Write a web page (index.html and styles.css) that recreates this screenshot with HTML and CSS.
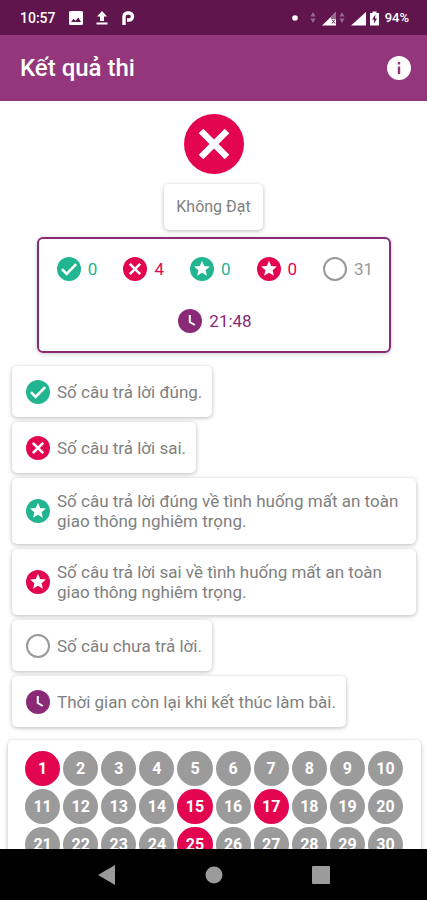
FILE: index.html
```html
<!DOCTYPE html>
<html lang="vi">
<head>
<meta charset="utf-8">
<meta name="viewport" content="width=device-width, initial-scale=1">
<title>Kết quả thi</title>
<link rel="stylesheet" href="styles.css">
</head>
<body>
<svg class="sprite" aria-hidden="true">
  <symbol id="check" viewBox="0 0 24 24"><circle cx="12" cy="12" r="12" fill="currentColor"/><path d="M5 12.200l4.600 4.600 9.600-9.600" fill="none" stroke="#fff" stroke-width="2.600"/></symbol>
  <symbol id="cross" viewBox="0 0 24 24"><circle cx="12" cy="12" r="12" fill="currentColor"/><path d="M6.800 6.800l10.400 10.400M17.200 6.800L6.800 17.200" fill="none" stroke="#fff" stroke-width="2.600"/></symbol>
  <symbol id="star" viewBox="0 0 24 24"><circle cx="12" cy="12" r="12" fill="currentColor"/><path d="M12 3.700l2.200 5.300 5.700.5-4.300 3.700 1.300 5.600-4.900-3-4.900 3 1.300-5.600-4.300-3.700 5.700-.5z" fill="#fff"/></symbol>
  <symbol id="ring" viewBox="0 0 24 24"><circle cx="12" cy="12" r="11" fill="none" stroke="currentColor" stroke-width="2"/></symbol>
  <symbol id="clock" viewBox="0 0 24 24"><circle cx="12" cy="12" r="12" fill="currentColor"/><path d="M11.800 6v7l5 3" fill="none" stroke="#fff" stroke-width="2"/></symbol>
</svg>

<div class="status">
  <span class="time">10:57</span>
  <svg class="note" viewBox="0 0 14 14"><rect width="14" height="14" rx="1.500" fill="#fff"/><path d="M2 11l2.500-3.200 2 2L9.300 6.500 12 11z" fill="#60154d"/></svg>
  <svg class="note" viewBox="0 0 14 14"><path d="M7 0l5 5.500H9V10H5V5.500H2zM1.500 11.500h11v2h-11z" fill="#fff"/></svg>
  <svg class="note" viewBox="0 0 14 14"><path d="M3 14V5.500A3.500 3.500 0 0 1 6.500 2H8a3.500 3.500 0 0 1 0 7H6" fill="none" stroke="#fff" stroke-width="3.400"/></svg>
  <svg class="signals" viewBox="0 0 90 16">
    <circle cx="4" cy="8" r="2.800" fill="#fff"/>
    <path d="M19.500 6.500L22 2l2.500 4.500zM19.500 8.500L22 13l2.500-4.500zM48.500 6.500L51 2l2.500 4.500zM48.500 8.500L51 13l2.500-4.500z" fill="#94698a"/>
    <path d="M31 15.500L45 2v13.500z" fill="#fff"/><path d="M40 6.500L45 2v7h-5z" fill="#94698a"/><path d="M41 9.500l3 4m0-4l-3 4" stroke="#60154d"/>
    <path d="M60 15.500L75 2v13.500z" fill="#fff"/>
    <path d="M79 3h2.500V1.500h4V3H88v12.500h-9z" fill="#fff"/><path d="M84.500 4.500L81 9.500h2v4l3-5h-2z" fill="#60154d"/>
  </svg>
  <span class="battery">94%</span>
</div>

<header class="appbar">
  <h1>Kết quả thi</h1>
  <button class="info" aria-label="Thông tin"><svg viewBox="0 0 24 24"><circle cx="12" cy="12" r="12" fill="#fff"/><path d="M10.800 6h2.400v2.400h-2.400zM10.800 10.500h2.400V18h-2.400z" fill="#93367b"/></svg></button>
</header>

<main>
  <svg class="verdict bad"><use href="#cross"/></svg>
  <p class="card result">Không Đạt</p>

  <section class="summary">
    <span class="stat good"><svg class="icon"><use href="#check"/></svg>0</span>
    <span class="stat bad"><svg class="icon"><use href="#cross"/></svg>4</span>
    <span class="stat good"><svg class="icon"><use href="#star"/></svg>0</span>
    <span class="stat bad"><svg class="icon"><use href="#star"/></svg>0</span>
    <span class="stat none"><svg class="icon"><use href="#ring"/></svg>31</span>
    <span class="stat left"><svg class="icon"><use href="#clock"/></svg>21:48</span>
  </section>

  <ul class="legend">
    <li class="card"><svg class="icon good"><use href="#check"/></svg><span>Số câu trả lời đúng.</span></li>
    <li class="card"><svg class="icon bad"><use href="#cross"/></svg><span>Số câu trả lời sai.</span></li>
    <li class="card"><svg class="icon good"><use href="#star"/></svg><span>Số câu trả lời đúng về tình huống mất an toàn giao thông nghiêm trọng.</span></li>
    <li class="card"><svg class="icon bad"><use href="#star"/></svg><span>Số câu trả lời sai về tình huống mất an toàn giao thông nghiêm trọng.</span></li>
    <li class="card"><svg class="icon none"><use href="#ring"/></svg><span>Số câu chưa trả lời.</span></li>
    <li class="card"><svg class="icon left"><use href="#clock"/></svg><span>Thời gian còn lại khi kết thúc làm bài.</span></li>
  </ul>

  <section class="card questions">
    <button class="wrong">1</button><button>2</button><button>3</button><button>4</button><button>5</button><button>6</button><button>7</button><button>8</button><button>9</button><button>10</button>
    <button>11</button><button>12</button><button>13</button><button>14</button><button class="wrong">15</button><button>16</button><button class="wrong">17</button><button>18</button><button>19</button><button>20</button>
    <button>21</button><button>22</button><button>23</button><button>24</button><button class="wrong">25</button><button>26</button><button>27</button><button>28</button><button>29</button><button>30</button>
  </section>
</main>

<nav class="navbar">
  <button aria-label="Quay lại"><svg viewBox="0 0 20 20"><path d="M1 10L18 0v20z"/></svg></button>
  <button aria-label="Trang chủ"><svg viewBox="0 0 20 20"><circle cx="10" cy="10" r="8.500"/></svg></button>
  <button aria-label="Gần đây"><svg viewBox="0 0 20 20"><rect x="1" y="1" width="18" height="18" rx="1"/></svg></button>
</nav>
</body>
</html>
```
FILE: styles.css
```css
* { box-sizing: border-box; }

body {
  margin: 0;
  height: 100vh;
  display: flex;
  flex-direction: column;
  overflow: hidden;
  background: #fff;
  color: #808080;
  font: 16px/20px Roboto, sans-serif;
}

button { border: 0; padding: 0; font: inherit; }
svg { display: block; flex: none; }
.sprite { position: absolute; width: 0; height: 0; }

.good { color: #21b592; }
.bad { color: #e3054f; }
.none { color: #999; }
.left { color: #8a2975; }

.status {
  flex: none;
  display: flex;
  align-items: center;
  height: 35px;
  padding: 0 18px 0 20px;
  background: #60154d;
  color: #fff;
  font-size: 14px;
  font-weight: 500;
}
.time { margin-right: 13px; }
.battery { font-size: 13px; }
.note { width: 14px; height: 14px; margin-right: 12px; }
.signals { width: 90px; height: 16px; margin-left: auto; margin-right: 4px; }

.appbar {
  flex: none;
  display: flex;
  align-items: center;
  justify-content: space-between;
  height: 66px;
  padding: 0 16px 0 20px;
  background: #93367b;
  color: #fff;
}
.appbar h1 { margin: 0; font-size: 24px; line-height: 32px; font-weight: 500; }
.info { background: none; }
.info svg { width: 24px; height: 24px; }

main {
  flex: 1;
  min-height: 0;
  overflow: hidden;
  display: flex;
  flex-direction: column;
  align-items: center;
  padding-top: 13px;
}
main > * { flex: none; }

.verdict { width: 60px; height: 60px; }

.card {
  background: #fff;
  border-radius: 5px;
  box-shadow: 0 1px 4px rgba(0, 0, 0, .28);
}
.result { margin: 10px 0 7px; padding: 13px 12px; }

.summary {
  align-self: stretch;
  display: flex;
  flex-wrap: wrap;
  justify-content: center;
  gap: 28px 26px;
  margin: 0 36px 13px 37px;
  padding: 18px 8px 18px 10px;
  border: 2px solid #8a2975;
  border-radius: 6px;
  box-shadow: 0 1px 4px rgba(0, 0, 0, .2);
  font-size: 17px;
}
.stat { display: flex; align-items: center; gap: 7px; }
.icon { width: 24px; height: 24px; }

.legend {
  align-self: stretch;
  display: flex;
  flex-direction: column;
  align-items: flex-start;
  gap: 5px;
  margin: 0 0 13px;
  padding: 0 11px 0 12px;
  list-style: none;
  font-size: 17px;
}
.legend .card {
  display: flex;
  align-items: center;
  gap: 7px;
  min-height: 51px;
  padding: 13px 10px 13px 14px;
}

.questions {
  align-self: stretch;
  display: grid;
  grid-template-columns: repeat(10, 1fr);
  gap: 3px;
  margin: 0 6px 0 8px;
  padding: 11px 18px 11px 17px;
}
.questions button {
  aspect-ratio: 1;
  border-radius: 50%;
  background: #9b9b9b;
  color: #fff;
  font-weight: 700;
}
.questions .wrong { background: #e3054f; }

.navbar {
  flex: none;
  display: flex;
  justify-content: center;
  align-items: center;
  gap: 87px;
  height: 51px;
  background: #000;
}
.navbar button { background: none; }
.navbar svg { width: 20px; height: 20px; fill: #9b9b9b; }
```
